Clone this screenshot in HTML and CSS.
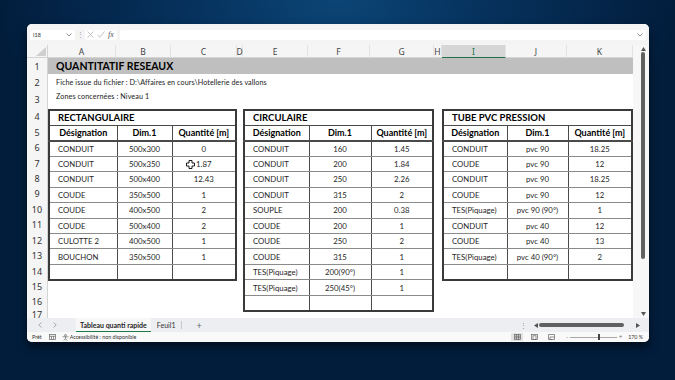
FILE: index.html
```html
<!DOCTYPE html>
<html lang="fr">
<head>
    <meta charset="UTF-8">
    <meta name="viewport" content="width=device-width, initial-scale=1.0">
    <title>Tableau quanti rapide</title>
    <link rel="stylesheet" href="styles.css">
</head>
<body>
    <div class="window">
        <div class="formula-bar">
            <div class="name-box">
                <span>I18</span>
                <svg class="chev" width="6" height="4" viewBox="0 0 6 4"><polyline points="0.5,0.5 3,3 5.5,0.5"/></svg>
            </div>
            <span class="vsep">⋮</span>
            <div class="fx-icons">
                <svg width="7" height="7" viewBox="0 0 7 7"><path d="M0.5 0.5L6.5 6.5M6.5 0.5L0.5 6.5"/></svg>
                <svg width="8" height="7" viewBox="0 0 8 7"><path d="M0.5 3.8L2.8 6.2L7.5 0.5"/></svg>
                <span class="fx">fx</span>
            </div>
            <div class="formula-input">
                <svg class="chev" width="6" height="4" viewBox="0 0 6 4"><polyline points="0.5,0.5 3,3 5.5,0.5"/></svg>
            </div>
        </div>

        <div class="main">
            <div class="sheet">
                <div class="colh corner"><span class="tri"></span></div>
                <div class="colh">A</div>
                <div class="colh">B</div>
                <div class="colh">C</div>
                <div class="colh">D</div>
                <div class="colh">E</div>
                <div class="colh">F</div>
                <div class="colh">G</div>
                <div class="colh">H</div>
                <div class="colh sel">I</div>
                <div class="colh">J</div>
                <div class="colh">K</div>

                <div class="rows">
                    <div>1</div><div>2</div><div>3</div><div>4</div><div>5</div><div>6</div>
                    <div>7</div><div>8</div><div>9</div><div>10</div><div>11</div><div>12</div>
                    <div>13</div><div>14</div><div>15</div><div>16</div><div class="cut">17</div>
                </div>

                <div class="title">QUANTITATIF RESEAUX</div>
                <div class="note note-file">Fiche issue du fichier : D:\Affaires en cours\Hotellerie des vallons</div>
                <div class="note note-zone">Zones concernées : Niveau 1</div>

                <div class="block b1">
                    <table class="tbl t1">
                        <colgroup><col class="c1"><col class="c2"><col class="c3"></colgroup>
                        <tr class="caption"><th colspan="3">RECTANGULAIRE</th></tr>
                        <tr class="head"><th>Désignation</th><th>Dim.1</th><th>Quantité [m]</th></tr>
                        <tr><td class="name">CONDUIT</td><td>500x300</td><td>0</td></tr>
                        <tr><td class="name">CONDUIT</td><td>500x350</td><td class="hover">1.87<span class="cursor"><svg width="9" height="9" viewBox="0 0 9 9"><path d="M3 0.5H6V3H8.5V6H6V8.5H3V6H0.5V3H3Z"/></svg></span></td></tr>
                        <tr><td class="name">CONDUIT</td><td>500x400</td><td>12.43</td></tr>
                        <tr><td class="name">COUDE</td><td>350x500</td><td>1</td></tr>
                        <tr><td class="name">COUDE</td><td>400x500</td><td>2</td></tr>
                        <tr><td class="name">COUDE</td><td>500x400</td><td>2</td></tr>
                        <tr><td class="name">CULOTTE 2</td><td>400x500</td><td>1</td></tr>
                        <tr><td class="name">BOUCHON</td><td>350x500</td><td>1</td></tr>
                        <tr><td class="name"></td><td></td><td></td></tr>
                    </table>
                </div>

                <div class="block b2">
                    <table class="tbl t2">
                        <colgroup><col class="c1"><col class="c2"><col class="c3"></colgroup>
                        <tr class="caption"><th colspan="3">CIRCULAIRE</th></tr>
                        <tr class="head"><th>Désignation</th><th>Dim.1</th><th>Quantité [m]</th></tr>
                        <tr><td class="name">CONDUIT</td><td>160</td><td>1.45</td></tr>
                        <tr><td class="name">CONDUIT</td><td>200</td><td>1.84</td></tr>
                        <tr><td class="name">CONDUIT</td><td>250</td><td>2.26</td></tr>
                        <tr><td class="name">CONDUIT</td><td>315</td><td>2</td></tr>
                        <tr><td class="name">SOUPLE</td><td>200</td><td>0.38</td></tr>
                        <tr><td class="name">COUDE</td><td>200</td><td>1</td></tr>
                        <tr><td class="name">COUDE</td><td>250</td><td>2</td></tr>
                        <tr><td class="name">COUDE</td><td>315</td><td>1</td></tr>
                        <tr><td class="name">TES(Piquage)</td><td>200(90°)</td><td>1</td></tr>
                        <tr><td class="name">TES(Piquage)</td><td>250(45°)</td><td>1</td></tr>
                        <tr><td class="name"></td><td></td><td></td></tr>
                    </table>
                </div>

                <div class="block b3">
                    <table class="tbl t3">
                        <colgroup><col class="c1"><col class="c2"><col class="c3"></colgroup>
                        <tr class="caption"><th colspan="3">TUBE PVC PRESSION</th></tr>
                        <tr class="head"><th>Désignation</th><th>Dim.1</th><th>Quantité [m]</th></tr>
                        <tr><td class="name">CONDUIT</td><td>pvc 90</td><td>18.25</td></tr>
                        <tr><td class="name">COUDE</td><td>pvc 90</td><td>12</td></tr>
                        <tr><td class="name">CONDUIT</td><td>pvc 90</td><td>18.25</td></tr>
                        <tr><td class="name">COUDE</td><td>pvc 90</td><td>12</td></tr>
                        <tr><td class="name">TES(Piquage)</td><td>pvc 90 (90°)</td><td>1</td></tr>
                        <tr><td class="name">CONDUIT</td><td>pvc 40</td><td>12</td></tr>
                        <tr><td class="name">COUDE</td><td>pvc 40</td><td>13</td></tr>
                        <tr><td class="name">TES(Piquage)</td><td>pvc 40 (90°)</td><td>2</td></tr>
                        <tr><td class="name"></td><td></td><td></td></tr>
                    </table>
                </div>
            </div>

            <div class="vscroll">
                <svg width="5" height="4" viewBox="0 0 5 4"><path d="M2.5 0L5 4H0Z"/></svg>
                <div class="vthumb"></div>
                <div class="grow"></div>
                <svg width="5" height="4" viewBox="0 0 5 4"><path d="M0 0H5L2.5 4Z"/></svg>
            </div>
        </div>

        <div class="tabbar">
            <svg class="nav" width="4" height="6" viewBox="0 0 4 6"><polyline points="3.5,0.5 0.8,3 3.5,5.5"/></svg>
            <svg class="nav" width="4" height="6" viewBox="0 0 4 6"><polyline points="0.5,0.5 3.2,3 0.5,5.5"/></svg>
            <div class="tab active">Tableau quanti rapide</div>
            <div class="tab">Feuil1</div>
            <span class="tab-sep"></span>
            <span class="add">+</span>
            <div class="grow"></div>
            <span class="hdots">⋮</span>
            <div class="hscroll">
                <svg width="4" height="5" viewBox="0 0 4 5"><path d="M0 2.5L4 0V5Z"/></svg>
                <div class="hthumb"></div>
                <svg width="4" height="5" viewBox="0 0 4 5"><path d="M4 2.5L0 0V5Z"/></svg>
            </div>
        </div>

        <div class="statusbar">
            <span class="ready">Prêt</span>
            <svg class="macro" width="7" height="6" viewBox="0 0 7 6"><rect x="0.5" y="0.5" width="6" height="5"/><path d="M0.5 2.3H6.5M2.5 2.3V5.5M4.5 2.3V5.5"/></svg>
            <svg class="acc" width="7" height="7" viewBox="0 0 7 7"><circle cx="3.5" cy="1.3" r="0.9"/><path d="M0.6 2.8H6.4M3.5 2.8V4.6L1.8 6.6M3.5 4.6L5.2 6.6"/></svg>
            <span>Accessibilité : non disponible</span>
            <div class="grow"></div>
            <div class="view on"><svg width="7" height="6" viewBox="0 0 7 6"><rect x="0.5" y="0.5" width="6" height="5"/><path d="M0.5 2.2H6.5M0.5 3.8H6.5M2.5 0.5V5.5M4.5 0.5V5.5"/></svg></div>
            <div class="view"><svg width="7" height="6" viewBox="0 0 7 6"><rect x="0.5" y="0.5" width="6" height="5"/><rect x="2" y="1.8" width="3" height="3.7"/></svg></div>
            <div class="view"><svg width="7" height="6" viewBox="0 0 7 6"><path d="M0.5 0.5H6.5V3M0.5 0.5V5.5H4M2 3H6.5V5.5H2Z"/></svg></div>
            <div class="zoom">
                <span>-</span>
                <div class="slider"><span class="knob"></span></div>
                <span>+</span>
                <span class="pct">170 %</span>
            </div>
        </div>
    </div>
</body>
</html>
```

FILE: styles.css
```css
body {
    margin: 0;
    width: 675px;
    height: 380px;
    box-sizing: border-box;
    padding: 24px 0 0 27px;
    overflow: hidden;
    font-family: Lato, "Noto Sans", sans-serif;
    background: radial-gradient(ellipse 340px 200px at 50% 0%, #0b4576 0%, #06315c 45%, #021d3c 100%);
    background-color: #021b38;
}

.window {
    width: 622px;
    height: 318px;
    display: flex;
    flex-direction: column;
    background: #f3f3f3;
    border-radius: 5px;
    overflow: hidden;
    box-shadow: 0 5px 10px rgba(0, 0, 0, 0.55);
}

/* formula bar */
.formula-bar {
    height: 21px;
    flex: none;
    display: flex;
    align-items: center;
    padding: 0 3px;
    background: #f4f4f4;
}
.name-box {
    width: 45px;
    height: 10px;
    box-sizing: border-box;
    display: flex;
    align-items: center;
    justify-content: space-between;
    padding: 0 3px;
    background: #fff;
    border-radius: 2px;
    font-size: 5.5px;
    color: #333;
}
.chev {
    fill: none;
    stroke: #777;
    stroke-width: 0.8;
}
.vsep {
    width: 10px;
    text-align: center;
    font-size: 7px;
    color: #999;
}
.fx-icons {
    width: 32px;
    height: 10px;
    display: flex;
    align-items: center;
    gap: 3px;
    padding-left: 2px;
    box-sizing: border-box;
    background: #fff;
    border-radius: 2px;
}
.fx-icons svg {
    fill: none;
    stroke: #b5b5b5;
    stroke-width: 0.8;
}
.fx {
    font-family: "Liberation Serif", serif;
    font-style: italic;
    font-size: 8px;
    color: #555;
}
.formula-input {
    flex: 1;
    height: 10px;
    margin-left: 3px;
    display: flex;
    align-items: center;
    justify-content: flex-end;
    padding-right: 3px;
    background: #fff;
    border-radius: 2px;
}

/* sheet */
.main {
    height: 273px;
    flex: none;
    display: flex;
}
.sheet {
    width: 606px;
    display: grid;
    grid-template-columns: 21px 68px 55px 66px 6px 65px 62px 64px 8px 64px 61px 66px;
    grid-template-rows: 13px 16px 16px 19px repeat(13, 15.45px) 1fr;
    background: #fff;
    overflow: hidden;
}
.colh {
    display: flex;
    align-items: center;
    justify-content: center;
    background: #f5f5f5;
    border-right: 1px solid #e3e3e3;
    border-bottom: 1px solid #d4d4d4;
    font-family: "Noto Sans", sans-serif;
    font-size: 8.5px;
    color: #444;
}
.colh.corner {
    position: relative;
    border-right: 1px solid #d4d4d4;
}
.tri {
    position: absolute;
    right: 1px;
    bottom: 1px;
    border-left: 10px solid transparent;
    border-bottom: 9px solid #cfcfcf;
}
.colh.sel {
    background: #d6d6d6;
    color: #217346;
    border-bottom: 1px solid #217346;
}

.rows {
    grid-column: 1;
    grid-row: 2 / -1;
    display: grid;
    grid-template-rows: 16px 16px 19px repeat(13, 15.45px) 1fr;
    background: #f5f5f5;
    border-right: 1px solid #d4d4d4;
}
.rows div {
    display: flex;
    align-items: center;
    justify-content: center;
    font-family: "Noto Sans", sans-serif;
    font-size: 9px;
    color: #333;
}
.rows .cut {
    align-items: flex-start;
    line-height: 9px;
}

.title {
    grid-column: 2 / 13;
    grid-row: 2;
    display: flex;
    align-items: center;
    padding-left: 8px;
    background: #bfbfbf;
    font-size: 10.5px;
    font-weight: bold;
    color: #000;
}
.note {
    grid-column: 2 / 13;
    padding-left: 8px;
    font-size: 7.2px;
    color: #222;
    white-space: nowrap;
}
.note-file {
    grid-row: 3;
    align-self: center;
    letter-spacing: 0.08px;
}
.note-zone {
    grid-row: 4;
    padding-top: 2px;
    letter-spacing: 0.1px;
}

.block {
    min-height: 0;
}
.b1 {
    grid-column: 2 / 5;
    grid-row: 5 / 16;
}
.b2 {
    grid-column: 6 / 9;
    grid-row: 5 / 18;
}
.b3 {
    grid-column: 10 / 13;
    grid-row: 5 / 16;
}

.tbl {
    width: 100%;
    table-layout: fixed;
    border-collapse: collapse;
    border: 2px solid #3a3a3a;
    font-size: 7.8px;
    color: #262626;
}
.tbl tr {
    height: 15.45px;
}
.t1 .c1 { width: 68px; }
.t1 .c2 { width: 55px; }
.t2 .c1 { width: 65px; }
.t2 .c2 { width: 62px; }
.t3 .c1 { width: 64px; }
.t3 .c2 { width: 61px; }

.tbl td, .tbl th {
    padding: 0;
    line-height: 10px;
    text-align: center;
    white-space: nowrap;
    overflow: hidden;
    border-left: 1px solid #4a4a4a;
    border-bottom: 1px solid #8a8a8a;
}
.tbl .name {
    text-align: left;
    padding-left: 8px;
}
.caption th {
    text-align: left;
    padding-left: 8px;
    font-size: 9.5px;
    color: #000;
    border-bottom: 1px solid #4a4a4a;
}
.head th {
    font-size: 9px;
    color: #000;
    border-bottom: 2px solid #4a4a4a;
}
.hover {
    position: relative;
}
.cursor {
    position: absolute;
    left: 13px;
    top: 3px;
    line-height: 0;
}
.cursor svg {
    fill: #fff;
    stroke: #000;
    stroke-width: 0.9;
}

/* vertical scrollbar */
.vscroll {
    width: 16px;
    display: flex;
    flex-direction: column;
    align-items: center;
    padding: 2px 0 2px 4px;
    box-sizing: border-box;
    background: #f7f7f7;
}
.vscroll svg {
    fill: #555;
    flex: none;
}
.vthumb {
    width: 4px;
    height: 207px;
    margin-top: 1px;
    background: #606060;
    border-radius: 2px;
}
.grow {
    flex: 1;
}

/* sheet tabs */
.tabbar {
    height: 14px;
    flex: none;
    display: flex;
    align-items: center;
    padding-left: 11px;
    background: #eceef1;
    font-size: 7px;
    color: #333;
}
.nav {
    fill: none;
    stroke: #9a9a9a;
    stroke-width: 0.8;
    margin-right: 11px;
}
.tab {
    height: 14px;
    display: flex;
    align-items: center;
    padding: 0 4px;
    box-sizing: border-box;
}
.tab.active {
    margin-left: 8px;
    background: #f7f7f7;
    font-weight: bold;
    color: #1f1f1f;
    border-bottom: 1.5px solid #1e7a45;
    padding-top: 1px;
}
.tab + .tab {
    margin-left: 2px;
}
.tab-sep {
    width: 1px;
    height: 8px;
    margin-left: 2px;
    background: #c8c8c8;
}
.add {
    margin-left: 14px;
    font-size: 9px;
    color: #666;
}
.hdots {
    font-size: 7px;
    color: #888;
    margin-right: 7px;
}
.hscroll {
    width: 106px;
    display: flex;
    align-items: center;
    gap: 1px;
    margin-right: 9px;
}
.hscroll svg {
    fill: #555;
    flex: none;
}
.hthumb {
    width: 86px;
    height: 4px;
    margin-right: 11px;
    background: #606060;
    border-radius: 2px;
}

/* status bar */
.statusbar {
    height: 10px;
    flex: none;
    display: flex;
    align-items: center;
    padding-left: 5px;
    background: #f9f9f9;
    font-size: 5.3px;
    color: #333;
}
.ready {
    margin-right: 7px;
}
.statusbar svg {
    fill: none;
    stroke: #666;
    stroke-width: 0.7;
}
.macro {
    margin-right: 6px;
}
.acc {
    margin-right: 1px;
}
.view {
    width: 12px;
    height: 8px;
    display: flex;
    align-items: center;
    justify-content: center;
    margin-right: 5px;
}
.view.on {
    background: #e2e2e2;
}
.zoom {
    display: flex;
    align-items: center;
    gap: 2px;
    margin-left: 4px;
    margin-right: 6px;
    color: #666;
}
.slider {
    width: 47px;
    height: 1px;
    position: relative;
    background: #aaa;
}
.knob {
    position: absolute;
    left: 28px;
    top: -2.5px;
    width: 2px;
    height: 6px;
    background: #444;
}
.pct {
    margin-left: 4px;
    color: #333;
}
```
